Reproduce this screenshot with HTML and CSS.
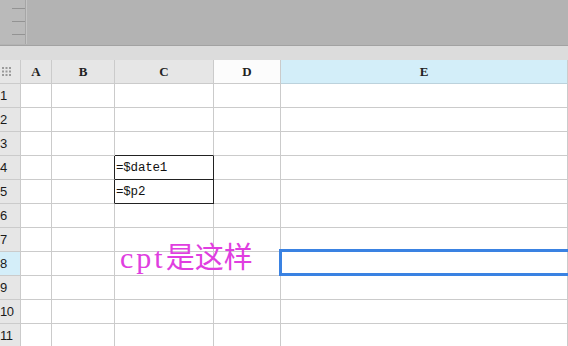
FILE: index.html
```html
<!DOCTYPE html>
<html>
<head>
<meta charset="utf-8">
<link rel="stylesheet" href="styles.css">
</head>
<body>
<div class="toolbar">
  <div class="ruler">
    <span class="tick"></span><span class="tick"></span><span class="tick"></span>
  </div>
  <div class="toolfill"></div>
</div>
<div class="strip"></div>
<div class="sheet">
  <div class="corner hd">
    <svg width="9" height="9" viewBox="0 0 9 9"><g fill="#9a9a9a"><rect x="0" y="0" width="2" height="2"/><rect x="3.5" y="0" width="2" height="2"/><rect x="7" y="0" width="2" height="2"/><rect x="0" y="3.5" width="2" height="2"/><rect x="3.5" y="3.5" width="2" height="2"/><rect x="7" y="3.5" width="2" height="2"/><rect x="0" y="7" width="2" height="2"/><rect x="3.5" y="7" width="2" height="2"/><rect x="7" y="7" width="2" height="2"/></g></svg>
  </div>
  <div class="ch hd">A</div>
  <div class="ch hd">B</div>
  <div class="ch hd">C</div>
  <div class="ch hd white">D</div>
  <div class="ch hd sel">E</div>

  <div class="rh">1</div><div class="c"></div><div class="c"></div><div class="c"></div><div class="c"></div><div class="c"></div>
  <div class="rh">2</div><div class="c"></div><div class="c"></div><div class="c"></div><div class="c"></div><div class="c"></div>
  <div class="rh">3</div><div class="c"></div><div class="c"></div><div class="c bb"></div><div class="c"></div><div class="c"></div>
  <div class="rh">4</div><div class="c"></div><div class="c br"></div><div class="c box">=$date1</div><div class="c"></div><div class="c"></div>
  <div class="rh">5</div><div class="c"></div><div class="c br"></div><div class="c box">=$p2</div><div class="c"></div><div class="c"></div>
  <div class="rh">6</div><div class="c"></div><div class="c"></div><div class="c"></div><div class="c"></div><div class="c"></div>
  <div class="rh">7</div><div class="c"></div><div class="c"></div><div class="c"></div><div class="c"></div><div class="c"></div>
  <div class="rh sel">8</div><div class="c"></div><div class="c"></div><div class="c"></div><div class="c"></div><div class="c active"><div class="selbox"></div></div>
  <div class="rh">9</div><div class="c"></div><div class="c"></div><div class="c"></div><div class="c"></div><div class="c"></div>
  <div class="rh">10</div><div class="c"></div><div class="c"></div><div class="c"></div><div class="c"></div><div class="c"></div>
  <div class="rh">11</div><div class="c"></div><div class="c"></div><div class="c"></div><div class="c"></div><div class="c"></div>

  <div class="note"><span class="latin">cpt</span>是这样</div>
</div>
</body>
</html>
```

FILE: styles.css
```css
html, body {
  margin: 0;
  padding: 0;
  background: #ffffff;
  overflow: hidden;
}
body {
  width: 568px;
  height: 346px;
}
.toolbar {
  display: flex;
  height: 45px;
  background: #b3b3b3;
  border-bottom: 1px solid #a2a2a2;
}
.ruler {
  width: 26px;
  background: #bababa;
  border-right: 1px solid #a6a6a6;
  box-shadow: 1px 0 0 #c4c4c4;
  display: flex;
  flex-direction: column;
  align-items: flex-end;
  padding-top: 8px;
  gap: 12px;
  box-sizing: border-box;
  height: 44px;
}
.tick {
  display: block;
  width: 13px;
  height: 1px;
  background: #939393;
}
.toolfill {
  flex: 1;
}
.strip {
  height: 14px;
  background: #dcdcdc;
}
.sheet {
  position: relative;
  display: grid;
  grid-template-columns: 21px 31px 63px 99px 67px 1fr;
  grid-auto-rows: 24px;
}
.sheet > div {
  box-sizing: border-box;
  border-right: 1px solid #cbcbcb;
  border-bottom: 1px solid #cbcbcb;
}
.hd {
  background: #e6e6e6;
  display: flex;
  align-items: center;
  justify-content: center;
  font-family: "Liberation Serif", serif;
  font-weight: bold;
  font-size: 13px;
  color: #222;
  border-bottom-color: #c4c4c4;
}
.corner {
  justify-content: flex-start;
  padding-left: 2px;
}
.hd.white {
  background: #fcfcfc;
}
.hd.sel {
  background: #d3eef9;
  border-bottom-color: #bcd2dc;
}
.rh {
  background: #e6e6e6;
  font-family: "Liberation Sans", sans-serif;
  font-size: 13px;
  color: #1a1a1a;
  display: flex;
  align-items: center;
  padding-left: 0;
  letter-spacing: -0.5px;
}
.rh.sel {
  background: #d4eef9;
}
.c {
  background: #fff;
}
.sheet > .bb {
  border-bottom-color: #222;
}
.sheet > .br {
  border-right-color: #222;
}
.sheet > .box {
  border-right-color: #222;
  border-bottom-color: #222;
  font-family: "Liberation Mono", monospace;
  font-size: 12.5px;
  color: #111;
  display: flex;
  align-items: center;
  padding-left: 1px;
  letter-spacing: -0.2px;
}
.active {
  position: relative;
}
.sheet > .active > .selbox {
  position: absolute;
  left: -2px;
  top: -3px;
  right: -10px;
  bottom: -1px;
  border: 3px solid #3a82e2;
}
.sheet > .note {
  position: absolute;
  left: 120px;
  top: 178px;
  border: none;
  font-family: "Noto Sans CJK SC", sans-serif;
  font-size: 29px;
  line-height: 34px;
  color: #e03ee0;
  white-space: nowrap;
}
.latin {
  font-family: "Liberation Serif", serif;
  font-size: 30px;
  letter-spacing: 3px;
}
```
